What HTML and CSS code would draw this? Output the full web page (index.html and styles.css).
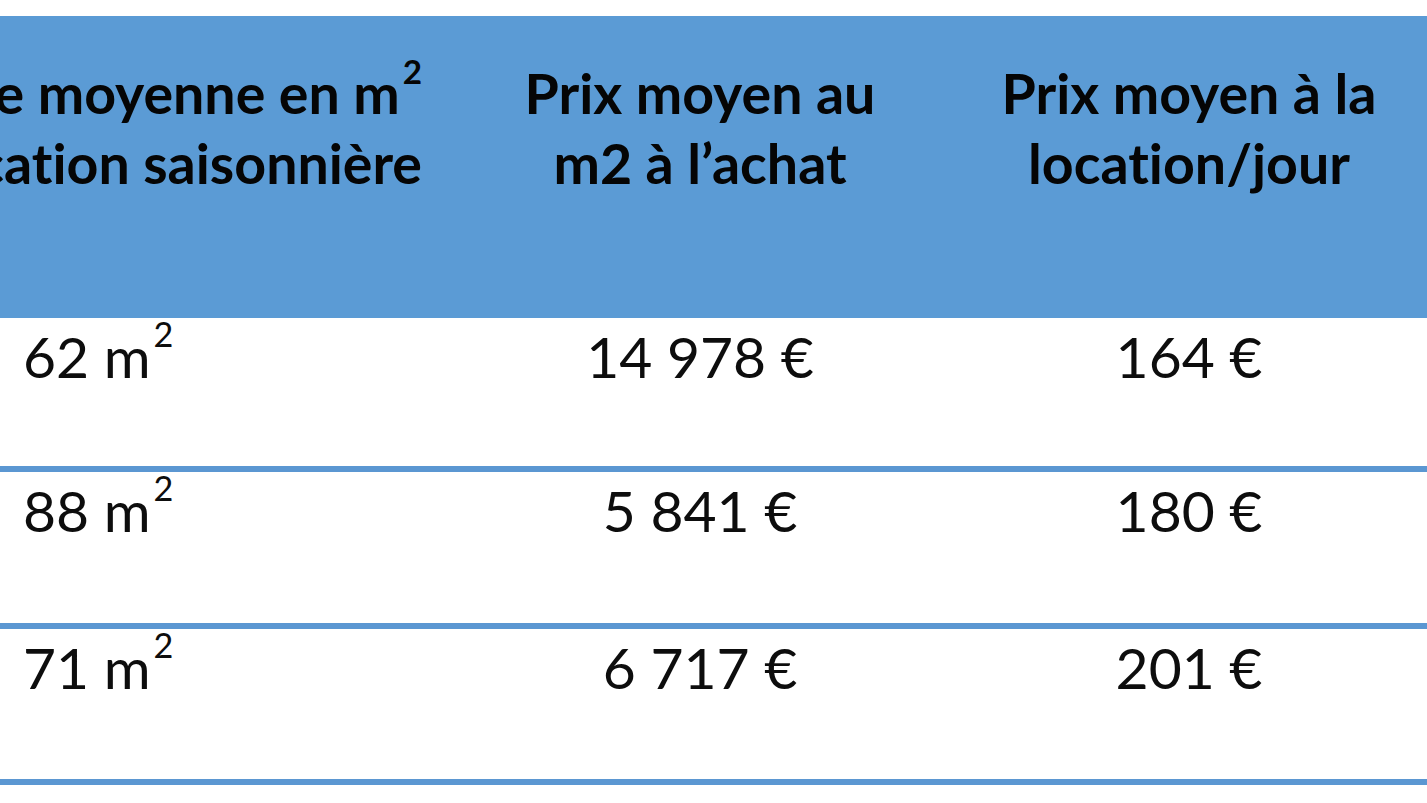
FILE: index.html
```html
<!DOCTYPE html>
<html lang="fr">
<head>
<meta charset="utf-8">
<title>Prix moyens location saisonnière</title>
<link rel="stylesheet" href="styles.css">
</head>
<body>
<div class="table">
  <div class="th th-first">
    <span class="line">Surface moyenne en m<sup>2</sup></span>
    <span class="line">de location saisonnière</span>
  </div>
  <div class="th">Prix moyen au<br>m2 à l’achat</div>
  <div class="th">Prix moyen à la<br>location/jour</div>

  <div class="td td-first">62 m<sup>2</sup></div>
  <div class="td">14 978 €</div>
  <div class="td">164 €</div>

  <div class="td td-first">88 m<sup>2</sup></div>
  <div class="td">5 841 €</div>
  <div class="td">180 €</div>

  <div class="td td-first">71 m<sup>2</sup></div>
  <div class="td">6 717 €</div>
  <div class="td">201 €</div>
</div>
</body>
</html>
```

FILE: styles.css
```css
html, body {
  margin: 0;
  padding: 0;
  background: #ffffff;
  overflow: hidden;
}

body {
  width: 1427px;
  height: 803px;
  font-family: "Lato", "Open Sans", "Liberation Sans", sans-serif;
  font-variant-ligatures: none;
  font-feature-settings: "liga" 0, "clig" 0;
  color: #0d0d0d;
}

.table {
  margin-top: 16px;
  display: grid;
  grid-template-columns: 456px 488px 490px;
  grid-template-rows: 302px 154px 157px 156px;
}

.th {
  background: #5b9bd5;
  font-weight: 700;
  font-size: 55.5px;
  line-height: 70px;
  text-align: center;
  padding-top: 42px;
  box-sizing: border-box;
  color: #050505;
  white-space: nowrap;
}

.th-first {
  display: flex;
  flex-direction: column;
  align-items: flex-end;
  padding-right: 34px;
  overflow: hidden;
}

.line {
  display: block;
  white-space: nowrap;
}

.td {
  box-sizing: border-box;
  border-bottom: 6px solid #5b97d2;
  font-size: 57px;
  line-height: 70px;
  padding-top: 3px;
  text-align: center;
  white-space: nowrap;
}

.td-first {
  text-align: left;
  padding-left: 23px;
}

sup {
  font-size: 0.6em;
  line-height: 0;
  vertical-align: 0.9em;
  margin-left: 3px;
}
```
